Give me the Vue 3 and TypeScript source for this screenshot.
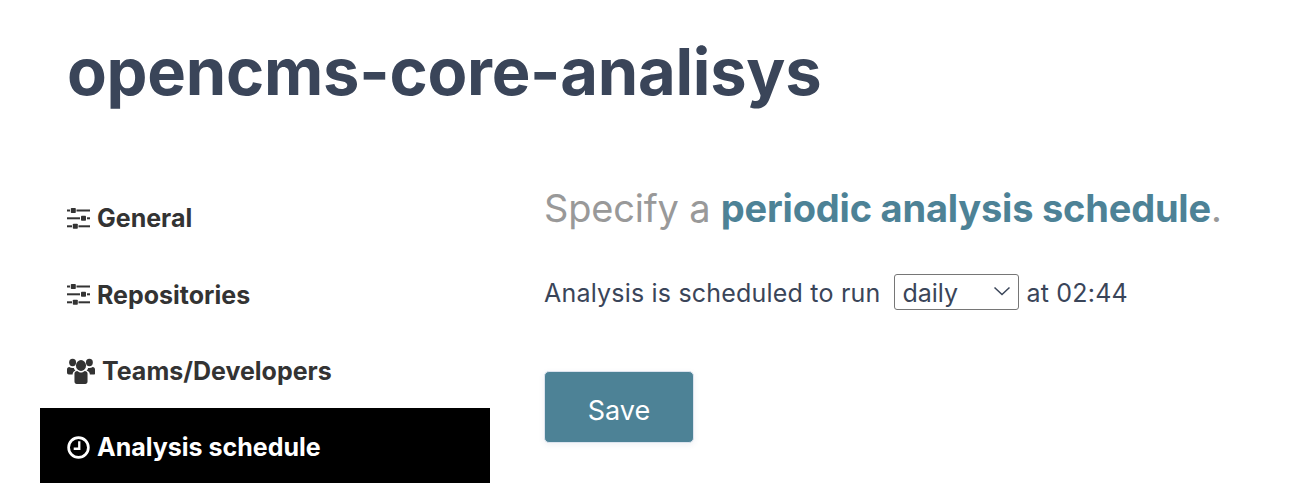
<script setup lang="ts">
interface NavItem { label: string; icon: string; active?: boolean }
const items: NavItem[] = [
  { label: 'General', icon: 'sliders' },
  { label: 'Repositories', icon: 'sliders' },
  { label: 'Teams/Developers', icon: 'users' },
  { label: 'Analysis schedule', icon: 'clock', active: true },
]
</script>

<template>
  <div class="page">
    <h1 class="title">opencms-core-analisys</h1>
    <div class="columns">
      <nav class="side">
        <a v-for="item in items" :key="item.label" class="item" :class="{ active: item.active }">
          <svg v-if="item.icon === 'sliders'" class="ic" width="23" height="21" viewBox="0 0 23 21" fill="currentColor">
            <rect x="0" y="1.500" width="3" height="2" />
            <rect x="9.500" y="1.500" width="13.500" height="2" />
            <rect x="0" y="9.300" width="13" height="2" />
            <rect x="20" y="9.300" width="3" height="2" />
            <rect x="0" y="17.300" width="5" height="2" />
            <rect x="11.500" y="17.300" width="11.500" height="2" />
            <rect x="3.800" y="0" width="5" height="5" rx="0.800" />
            <rect x="14" y="7.800" width="5" height="5" rx="0.800" />
            <rect x="5.800" y="15.800" width="5" height="5" rx="0.800" />
          </svg>
          <svg v-else-if="item.icon === 'users'" class="ic" width="28" height="26" viewBox="0 0 30 26" fill="currentColor" preserveAspectRatio="none">
            <circle cx="15" cy="7.500" r="5.400" />
            <circle cx="6" cy="4.500" r="3.700" />
            <circle cx="24" cy="4.500" r="3.700" />
            <path d="M8 15.500c0-1.600 1.300-2.600 3-2.600 1 .9 2.400 1.500 4 1.500s3-.6 4-1.500c1.700 0 3 1 3 2.600v8c0 1.500-1 2.500-2.400 2.500H10.400C9 26 8 25 8 23.500z" />
            <path d="M0 11.500C0 10 1 9 2.500 9c.9.700 2.100 1.100 3.500 1.100.400 0 .9 0 1.300-.1.300 1 .900 1.900 1.700 2.500C7.200 13.200 6 14.500 6 16.500H2c-1.200 0-2-.7-2-2z" />
            <path d="M30 11.500C30 10 29 9 27.500 9c-.9.700-2.100 1.100-3.500 1.100-.400 0-.9 0-1.300-.1-.300 1-.900 1.900-1.700 2.500 2.300.700 3.500 2 3.500 4h4c1.200 0 2-.7 2-2z" />
          </svg>
          <svg v-else class="ic" width="23" height="23" viewBox="0 0 24 24" fill="none" stroke="currentColor">
            <circle cx="12" cy="12" r="10.300" stroke-width="2.800" />
            <path d="M12.800 5.500v7.800H7" stroke-width="2.400" />
          </svg>
          <span>{{ item.label }}</span>
        </a>
      </nav>
      <main class="content">
        <h2 class="lead">Specify a <strong>periodic analysis schedule</strong>.</h2>
        <p class="line">
          <span>Analysis is scheduled to run</span>
          <span class="select-wrap">
            <select class="select">
              <option>daily</option>
            </select>
            <svg class="chev" width="18" height="10" viewBox="0 0 18 10" fill="none" stroke="#3a4559" stroke-width="1.500">
              <path d="M1.500 1.500 9 8.500l7.500-7" />
            </svg>
          </span>
          <span>at 02:44</span>
        </p>
        <button class="save" type="button">Save</button>
      </main>
    </div>
  </div>
</template>

<style>
html, body { margin: 0; background: #fff; }
</style>

<style scoped>
.page {
  width: 1292px;
  height: 502px;
  overflow: hidden;
  box-sizing: border-box;
  padding: 30px 40px 0;
  font-family: Inter, "Liberation Sans", sans-serif;
  color: #3a4559;
}
.title {
  margin: 0 0 64px 27px;
  font-size: 65px;
  line-height: 84px;
  font-weight: 700;
  letter-spacing: -0.25px;
  color: #3a4559;
  white-space: nowrap;
}
.columns { display: flex; }
.side { width: 450px; display: flex; flex-direction: column; flex: none; }
.item {
  height: 76.500px;
  box-sizing: border-box;
  padding: 4px 0 0 27px;
  display: flex;
  align-items: center;
  gap: 7px;
  font-size: 25px;
  font-weight: 700;
  color: #333;
}
.item.active { background: #000; color: #fff; height: 75px; }
.ic { flex: none; }
.content { margin-left: 54px; padding-top: 4px; }
.lead {
  margin: 0;
  font-size: 38px;
  line-height: 52px;
  font-weight: 400;
  color: #999;
  letter-spacing: -0.2px;
  white-space: nowrap;
}
.lead strong { color: #4d8296; font-weight: 700; }
.line {
  margin: 41px 0 0;
  font-size: 25px;
  line-height: 36px;
  letter-spacing: 0.2px;
  display: flex;
  align-items: center;
  white-space: nowrap;
  color: #3a4559;
}
.select-wrap { position: relative; display: block; margin: -2px 7px 0 14px; }
.select {
  display: block;
  appearance: none;
  width: 125px;
  height: 36px;
  padding: 0 7px;
  border: 1px solid #767676;
  border-radius: 3px;
  background: #fff;
  font: inherit;
  color: #3a4559;
}
.chev { position: absolute; right: 8px; top: 12px; pointer-events: none; }
.save {
  display: block;
  margin-top: 60px;
  width: 150px;
  height: 72px;
  padding-top: 8px;
  background: #4d8296;
  border: 1px solid #dbe3ee;
  border-radius: 5px;
  box-shadow: 0 2px 6px rgba(60, 80, 110, 0.08);
  color: #fff;
  font: inherit;
  font-size: 27px;
}
</style>
